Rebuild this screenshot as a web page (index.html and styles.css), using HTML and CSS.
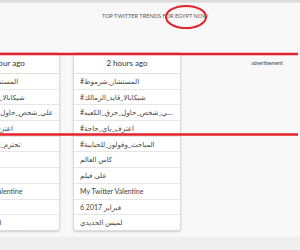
FILE: index.html
```html
<!DOCTYPE html>
<html lang="en">

<head>
    <meta charset="UTF-8">
    <meta name="viewport" content="width=device-width, initial-scale=1.0">
    <title>Top Twitter Trends for Egypt</title>
    <link rel="stylesheet" href="styles.css">
</head>

<body>
    <div class="topbar"></div>

    <h1 class="title">Top Twitter Trends for Egypt now</h1>

    <div class="board">
        <!-- one hour ago -->
        <div class="card">
            <div class="card-head">1 hour ago</div>
            <ul class="trends">
                <li>#المستشار_شرموط</li>
                <li>#شيكابالا_قايد_الزمالك</li>
                <li>#علي_شخص_حاول_حرق_الكعبه</li>
                <li>#اعترف_باي_حاجة</li>
                <li>#تحترم_الاخرين_ازاي</li>
                <li>كاس العالم</li>
                <li>على فيلم</li>
                <li>My Twitter Valentine</li>
                <li>فبراير 2017 6</li>
                <li>لميس الحديدي</li>
            </ul>
        </div>

        <!-- two hours ago -->
        <div class="card">
            <div class="card-head">2 hours ago</div>
            <ul class="trends">
                <li>#المستشار_شرموط</li>
                <li>#شيكابالا_قايد_الزمالك</li>
                <li>#اعترف_بانك_لو_اتخيرت_علي_شخص_حاول_حرق_الكعبه</li>
                <li>#اعترف_باي_حاجة</li>
                <li>#المباحث_وفولوز_للحبايبة</li>
                <li>كاس العالم</li>
                <li>على فيلم</li>
                <li>My Twitter Valentine</li>
                <li>فبراير 2017 6</li>
                <li>لميس الحديدي</li>
            </ul>
        </div>

        <div class="ad">advertisement</div>
    </div>

    <div class="footer"></div>

    <!-- red marks drawn over the screenshot -->
    <svg class="marks" width="300" height="250" viewBox="0 0 300 250">
        <ellipse cx="186" cy="17" rx="20" ry="11" fill="none" stroke="#e3222b" stroke-width="2"/>
        <line x1="0" y1="54" x2="298" y2="54" stroke="#e3222b" stroke-width="2.5"/>
        <line x1="0" y1="134.5" x2="298" y2="134.5" stroke="#e3222b" stroke-width="2.5"/>
    </svg>
</body>

</html>
```

FILE: styles.css
```css
/* General Styles */
body {
    font-family: Lato, "DejaVu Sans", sans-serif;
    background-color: #f8f8f8;
    color: #444;
    margin: 0;
    padding: 0;
    position: relative;
    overflow: hidden;
    height: 250px;
}

.topbar {
    height: 2px;
    background-color: #dcdcdc;
    border-bottom: 1px solid #e8e8e8;
}

.title {
    font-size: 5.6px;
    font-weight: normal;
    text-transform: uppercase;
    text-align: center;
    color: #555;
    margin: 9px 0 0 10px;
    line-height: 8px;
}

/* Trend columns */
.board {
    display: flex;
    align-items: flex-start;
    gap: 13px;
    margin: 32px 0 0 -48px;
}

.card {
    flex: 0 0 106px;
    background-color: #fff;
    border: 1px solid #dcdcdc;
    border-radius: 3px;
    box-shadow: 0 1px 2px rgba(0, 0, 0, 0.18);
    overflow: hidden;
}

.card-head {
    height: 20px;
    line-height: 21px;
    text-align: center;
    font-size: 8px;
    color: #333;
    border-bottom: 1px solid #e2e2e2;
}

.trends {
    list-style: none;
    margin: 0;
    padding: 0;
}

.trends li {
    height: 14.7px;
    line-height: 15px;
    padding: 0 6px;
    font-size: 7px;
    color: #444;
    white-space: nowrap;
    overflow: hidden;
    text-overflow: ellipsis;
    border-bottom: 1px solid #e6e6e6;
}

.trends li:last-child {
    border-bottom: none;
}

.ad {
    flex: 1;
    text-align: center;
    font-size: 5px;
    color: #444;
    padding: 8px 0 0 40px;
}

.footer {
    position: absolute;
    left: 0;
    right: 0;
    top: 237px;
    bottom: 0;
    background-color: #eeeeee;
}

.marks {
    position: absolute;
    left: 0;
    top: 0;
}
```
